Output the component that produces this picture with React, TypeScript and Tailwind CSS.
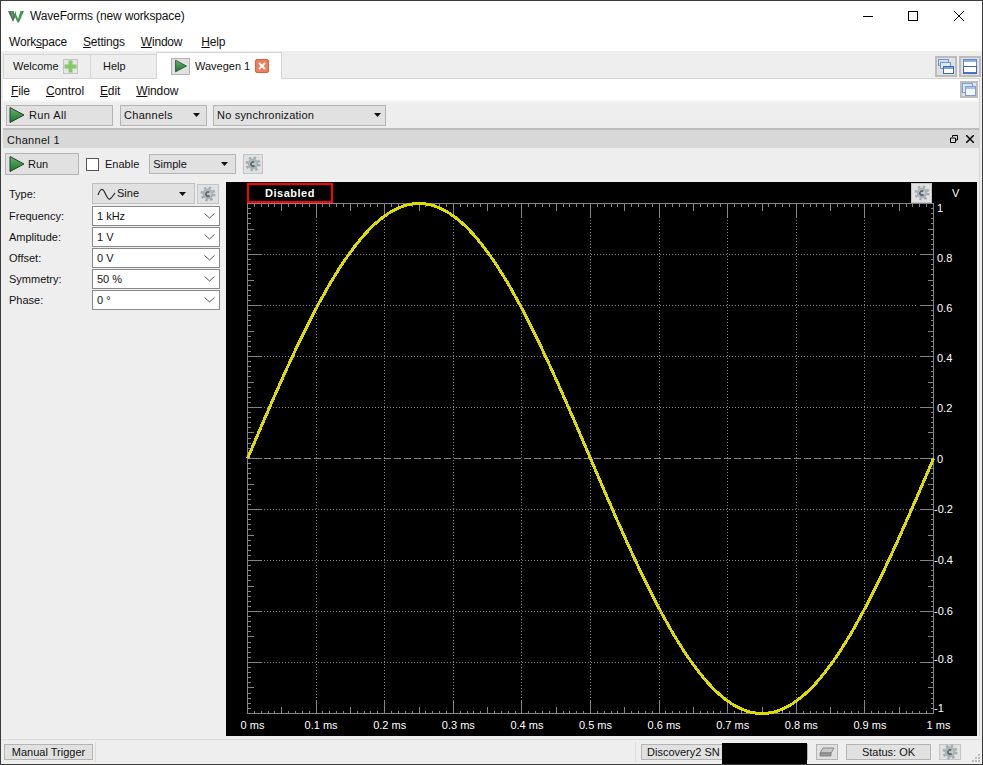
import React from 'react';

const labelFont = "font-['Liberation_Sans',Arial,sans-serif]";

const PlayIcon = ({ size = 18 }: { size?: number }) => (
  <svg width={size} height={size} viewBox="0 0 18 18" className="shrink-0">
    <defs>
      <linearGradient id="playFill" x1="0" y1="0" x2="0" y2="1">
        <stop offset="0" stopColor="#6fae6f" />
        <stop offset="1" stopColor="#0f7a2a" />
      </linearGradient>
    </defs>
    <path d="M2 1.5 L16 9 L2 16.5 Z" fill="url(#playFill)" stroke="#27402c" strokeWidth="1" />
  </svg>
);

const Caret = () => (
  <svg width="7" height="4" viewBox="0 0 7 4" className="shrink-0">
    <path d="M0 0 H7 L3.5 4 Z" fill="#111" />
  </svg>
);

const Chevron = () => (
  <svg width="11" height="6" viewBox="0 0 11 6" className="shrink-0">
    <path d="M0.5 0.5 L5.5 5 L10.5 0.5" fill="none" stroke="#555" strokeWidth="1" />
  </svg>
);

const GearIcon = () => (
  <svg width="16" height="16" viewBox="0 0 16 16">
    <circle cx="8" cy="8" r="6.2" fill="none" stroke="#a3adb2" strokeWidth="2.6" strokeDasharray="2.4 2.47" />
    <circle cx="8" cy="8" r="5.4" fill="#a9b2b7" />
    <circle cx="8" cy="8" r="3.4" fill="#c3c9cc" />
    <path d="M10 5.8 A3 3 0 1 0 10.4 10 L8.6 9 A1.2 1.2 0 1 1 8.6 7 Z" fill="#5a666c" />
  </svg>
);

const GearButton = ({ className }: { className: string }) => (
  <div className={`flex items-center justify-center border border-[#c4c4c4] bg-[#e1e1e1] ${className}`}>
    <GearIcon />
  </div>
);

const StackIcon = ({ variant }: { variant: 'cascade' | 'split' | 'small' }) => {
  if (variant === 'split') {
    return (
      <svg width="14" height="15" viewBox="0 0 14 15">
        <rect x="0.5" y="0.5" width="13" height="7" fill="#fff" stroke="#5f86c6" />
        <rect x="1" y="1" width="12" height="2" fill="#8fb0e2" />
        <rect x="0.5" y="7.5" width="13" height="7" fill="#fff" stroke="#3f68b0" />
        <rect x="1" y="13" width="12" height="1.5" fill="#4a74bd" />
      </svg>
    );
  }
  if (variant === 'small') {
    return (
      <svg width="14" height="13" viewBox="0 0 14 13">
        <rect x="0.5" y="0.5" width="10" height="9" fill="#dbe6f6" stroke="#7d9fd6" />
        <rect x="3.5" y="3.5" width="10" height="9" fill="#f4f7fc" stroke="#7d9fd6" />
        <rect x="4" y="4" width="9" height="2" fill="#a9c3e8" />
      </svg>
    );
  }
  return (
    <svg width="16" height="15" viewBox="0 0 16 15">
      <rect x="0.5" y="0.5" width="10" height="6" fill="#cfdcf2" stroke="#6f94d0" />
      <rect x="2.5" y="3.5" width="10" height="6" fill="#dfe8f7" stroke="#6f94d0" />
      <rect x="5.5" y="7.5" width="10" height="7" fill="#fff" stroke="#3f68b0" />
      <rect x="6" y="8" width="9" height="2" fill="#7fa3dc" />
    </svg>
  );
};

const Logo = () => (
  <svg width="16" height="13" viewBox="0 0 16 13" className="shrink-0">
    <path d="M0 1 L3 1 L5 7 L8 1 L8 5 L5 12 Z" fill="#5d6b62" />
    <path d="M3 1 L5.5 1 L7 5 L5.5 8 Z" fill="#3c8f4a" />
    <path d="M7.5 3 L10 9 L12.5 1 L16 1 L11 12.5 L9.5 12.5 L7 7 Z" fill="#3f9a4e" />
  </svg>
);

const Plot = () => {
  const left = 21.5;
  const right = 707.5;
  const top = 21.5;
  const bottom = 531.5;
  const stepX = (right - left) / 100;
  const stepY = (bottom - top) / 100;

  const ticks: React.ReactNode[] = [];
  for (let i = 1; i < 100; i++) {
    const x = Math.round(left + i * stepX - 0.5) + 0.5;
    const y = Math.round(top + i * stepY - 0.5) + 0.5;
    const lenX = i % 10 === 0 ? 14 : i % 5 === 0 ? 7 : 3;
    const lenY = i % 10 === 0 ? 14 : i % 5 === 0 ? 6 : 3;
    ticks.push(
      <path
        key={i}
        d={`M${x} ${top} V${top + lenX} M${x} ${bottom} V${bottom - lenX} M${left} ${y} H${left + lenY} M${right} ${y} H${right - lenY}`}
      />,
    );
  }

  const grid: React.ReactNode[] = [];
  for (let i = 1; i < 10; i++) {
    const x = Math.round(left + i * 10 * stepX - 0.5) + 0.5;
    const y = Math.round(top + i * 10 * stepY - 0.5) + 0.5;
    grid.push(
      <g key={i}>
        <path d={`M${x} ${top + 16} V${bottom - 16}`} strokeDasharray="1 2" />
        <path d={`M${left + 16} ${y} H${right - 16}`} strokeDasharray={i === 5 ? '7 3' : '1 2'} />
      </g>,
    );
  }

  const sine: string[] = [];
  for (let i = 0; i <= 400; i++) {
    const x = left + ((right - left) * i) / 400;
    const y = (top + bottom) / 2 - ((bottom - top) / 2) * Math.sin((2 * Math.PI * i) / 400);
    sine.push(`${i === 0 ? 'M' : 'L'}${x.toFixed(1)} ${y.toFixed(1)}`);
  }

  const yLabels: [string, number][] = [
    ['1', 30], ['0.8', 80], ['0.6', 130], ['0.4', 180], ['0.2', 230], ['0', 281],
    ['-0.2', 331], ['-0.4', 382], ['-0.6', 433], ['-0.8', 481], ['-1', 530],
  ];
  const xLabels = ['0 ms', '0.1 ms', '0.2 ms', '0.3 ms', '0.4 ms', '0.5 ms', '0.6 ms', '0.7 ms', '0.8 ms', '0.9 ms', '1 ms'];

  return (
    <svg width="751" height="554" viewBox="0 0 751 554" className="block">
      <g stroke="#858585" fill="none" strokeWidth="1" shapeRendering="crispEdges">
        {grid}
        {ticks}
        <rect x={left} y={top} width={right - left} height={bottom - top} />
      </g>
      <path d={sine.join(' ')} fill="none" stroke="#dcdc00" strokeWidth="3" shapeRendering="crispEdges" />
      <g fill="#fff" fontSize="11" fontFamily="'Liberation Sans', Arial, sans-serif">
        {yLabels.map(([t, y]) => (
          <text key={t} x={t.startsWith('-') ? 708 : 711} y={y}>{t}</text>
        ))}
        {xLabels.map((t, i) => (
          <text key={t} x={left + i * 68.6 + 5} y={547} textAnchor="middle">{t}</text>
        ))}
      </g>
    </svg>
  );
};

const params = [
  ['Frequency:', '1 kHz'],
  ['Amplitude:', '1 V'],
  ['Offset:', '0 V'],
  ['Symmetry:', '50 %'],
  ['Phase:', '0 °'],
];

export default function App() {
  return (
    <div className={`relative box-border flex h-[765px] w-[983px] flex-col overflow-hidden border border-[#3c3c3c] bg-[#eeeeee] text-[11px] leading-none text-[#111] ${labelFont}`}>
      {/* title bar */}
      <div className="flex h-[30px] shrink-0 items-center bg-white pl-[7px]">
        <Logo />
        <span className="ml-[6px] text-[12px] tracking-[-0.15px]">WaveForms (new workspace)</span>
        <div className="ml-auto flex items-center">
          <div className="mr-[35px] h-px w-[10px] bg-black" />
          <div className="mr-[36px] h-[10px] w-[10px] border border-black" />
          <svg width="10" height="10" viewBox="0 0 10 10" className="mr-[18px]">
            <path d="M0 0 L10 10 M10 0 L0 10" stroke="#000" strokeWidth="1" />
          </svg>
        </div>
      </div>

      {/* main menu */}
      <div className="flex h-[20px] shrink-0 items-center gap-[16px] bg-white pl-[8px] pt-[2px] text-[12px] tracking-[-0.2px]">
        <span>Work<u>s</u>pace</span>
        <span><u>S</u>ettings</span>
        <span className="mr-[3px]"><u>W</u>indow</span>
        <span><u>H</u>elp</span>
      </div>

      {/* tabs */}
      <div className="flex h-[27px] shrink-0 items-end pl-[2px] pr-[1px]">
        <div className="flex h-[24px] w-[87px] items-center border-l border-t border-[#d4d4d4] pl-[9px]">
          <span>Welcome</span>
          <div className="ml-[4px] flex h-[15px] w-[15px] items-center justify-center border border-[#c4c4c4] bg-[#e6e6e6]">
            <svg width="13" height="13" viewBox="0 0 13 13">
              <path d="M4.5 0.5 H8.5 V4.5 H12.5 V8.5 H8.5 V12.5 H4.5 V8.5 H0.5 V4.5 H4.5 Z" fill="#86c96a" />
            </svg>
          </div>
        </div>
        <div className="flex h-[24px] w-[66px] items-center border-l border-t border-[#d4d4d4] pl-[12px]">Help</div>
        <div className="relative z-10 -mb-px flex h-[27px] w-[126px] items-center border border-b-0 border-[#d4d4d4] bg-white pl-[14px]">
          <div className="flex h-[17px] w-[19px] items-center justify-center border border-[#b4b4b4] bg-[#e1e1e1]">
            <PlayIcon size={14} />
          </div>
          <span className="ml-[5px]">Wavegen 1</span>
          <div className="ml-[5px] flex h-[14px] w-[14px] items-center justify-center rounded-[2px] border border-[#d9623a] bg-[#ee7d5b]">
            <svg width="8" height="8" viewBox="0 0 8 8">
              <path d="M1 1 L7 7 M7 1 L1 7" stroke="#fff" strokeWidth="2" />
            </svg>
          </div>
        </div>
        <div className="mb-px ml-auto flex gap-[2px]">
          <div className="flex h-[21px] w-[22px] items-center justify-center border-2 border-[#bcbcbc] bg-[#e1e1e1]">
            <StackIcon variant="cascade" />
          </div>
          <div className="flex h-[21px] w-[22px] items-center justify-center border-2 border-[#bcbcbc] bg-[#e1e1e1]">
            <StackIcon variant="split" />
          </div>
        </div>
      </div>

      {/* workspace */}
      <div className="mx-[2px] flex flex-1 flex-col border-r border-t border-[#d4d4d4] pr-0">
        <div className="flex h-[21px] shrink-0 items-center gap-[16px] bg-white pl-[8px] text-[12px] tracking-[-0.1px]">
          <span className="pt-[2px]"><u>F</u>ile</span>
          <span className="pt-[2px]"><u>C</u>ontrol</span>
          <span className="pt-[2px]"><u>E</u>dit</span>
          <span className="pt-[2px]"><u>W</u>indow</span>
          <div className="ml-auto mr-[1px] flex h-[17px] w-[18px] items-center justify-center border-2 border-[#bcbcbc] bg-[#e1e1e1]">
            <StackIcon variant="small" />
          </div>
        </div>
        <div className="h-[2px] shrink-0 bg-[#f6f6f6]" />

        <div className="flex h-[26px] shrink-0 items-center pl-[3px]">
          <div className="flex h-[21px] w-[107px] items-center border border-[#b4b4b4] bg-[#e1e1e1] pl-[1px]">
            <PlayIcon />
            <span className="ml-[3px] tracking-[0.4px]">Run All</span>
          </div>
          <div className="ml-[7px] flex h-[21px] w-[87px] items-center justify-between border border-[#b4b4b4] bg-[#e1e1e1] pl-[3px] pr-[6px]">
            <span className="tracking-[0.3px]">Channels</span>
            <Caret />
          </div>
          <div className="ml-[6px] flex h-[21px] w-[173px] items-center justify-between border border-[#b4b4b4] bg-[#e1e1e1] pl-[3px] pr-[4px]">
            <span className="tracking-[0.2px]">No synchronization</span>
            <Caret />
          </div>
        </div>

        <div className="flex h-[20px] shrink-0 items-center border-t-2 border-[#bcbcbc] bg-[#d8d8d8] pl-[4px] pr-[5px]">
          <span className="pt-[3px] tracking-[0.3px]">Channel 1</span>
          <svg width="8" height="8" viewBox="0 0 8 8" className="ml-auto">
            <path d="M2.5 2 V0.5 H7.5 V5 H5.5 M0.5 3 H5.5 V7.5 H0.5 Z" fill="none" stroke="#000" />
          </svg>
          <svg width="8" height="8" viewBox="0 0 8 8" className="ml-[8px]">
            <path d="M0 0 L8 8 M8 0 L0 8" stroke="#000" strokeWidth="1.5" />
          </svg>
        </div>

        <div className="flex h-[34px] shrink-0 items-center pb-[2px] pl-[2px]">
          <div className="flex h-[22px] w-[74px] items-center border border-[#b4b4b4] bg-[#e1e1e1] pl-[2px]">
            <PlayIcon />
            <span className="ml-[2px]">Run</span>
          </div>
          <div className="ml-[7px] h-[13px] w-[13px] border border-[#555] bg-white" />
          <span className="ml-[6px]">Enable</span>
          <div className="ml-[10px] flex h-[20px] w-[87px] items-center justify-between border border-[#b4b4b4] bg-[#e1e1e1] pl-[3px] pr-[7px]">
            <span>Simple</span>
            <Caret />
          </div>
          <GearButton className="ml-[7px] h-[20px] w-[20px]" />
        </div>

        <div className="flex h-[554px] shrink-0">
          <div className="flex w-[223px] shrink-0 flex-col gap-[1px] pl-[6px] pt-[1px]">
            <div className="flex h-[22px] items-start">
              <span className="mt-[6px] w-[83px]">Type:</span>
              <div className="flex h-[21px] w-[103px] items-center border border-[#c0c0c0] bg-[#e1e1e1] pl-[4px] pr-[8px]">
                <svg width="19" height="14" viewBox="0 0 19 14" className="shrink-0">
                  <path d="M1 8 C3 2 5 1 7 4 C9 8 11 13 13 12 C15 11 17 7 18 6" fill="none" stroke="#222" strokeWidth="1.1" />
                </svg>
                <span className="ml-[1px]">Sine</span>
                <div className="ml-auto"><Caret /></div>
              </div>
              <GearButton className="ml-[2px] mt-[1px] h-[20px] w-[22px]" />
            </div>
            {params.map(([label, value]) => (
              <div key={label} className="flex h-[20px] items-center">
                <span className="w-[83px]">{label}</span>
                <div className="flex h-[20px] w-[128px] items-center justify-between border border-[#8a8a8a] bg-white pl-[4px] pr-[4px]">
                  <span>{value}</span>
                  <Chevron />
                </div>
              </div>
            ))}
          </div>

          <div className="relative w-[751px] shrink-0 bg-black">
            <Plot />
            <div className="absolute left-[21px] top-[1px] flex h-[20px] w-[86px] items-center justify-center border-2 border-[#ff0000] text-[11px] font-bold tracking-[0.5px] text-white">
              Disabled
            </div>
            <GearButton className="absolute left-[685px] top-[1px] h-[20px] w-[21px]" />
            <span className="absolute left-[726px] top-[6px] text-white">V</span>
          </div>
        </div>
      </div>

      {/* status bar */}
      <div className="relative mt-[3px] flex h-[25px] shrink-0 items-center border-t border-[#dcdcdc] bg-[#eeeeee] pl-[3px]">
        <div className="flex h-[16px] w-[89px] items-center justify-center border border-[#b4b4b4] bg-[#e1e1e1]">Manual Trigger</div>
        <div className="ml-[2px] h-[20px] w-px bg-[#dcdcdc]" />
        <div className="ml-[539px] h-[20px] w-px bg-[#dcdcdc]" />
        <div className="ml-[5px] flex h-[16px] w-[167px] items-center border border-[#b4b4b4] bg-[#e1e1e1] pl-[5px]">Discovery2 SN</div>
        <div className="ml-[8px] flex h-[16px] w-[22px] items-center justify-center border border-[#b4b4b4] bg-[#e1e1e1]">
          <svg width="16" height="10" viewBox="0 0 16 10">
            <path d="M4 1 H15 L12 6 H1 Z" fill="#c8c8c8" stroke="#777" strokeWidth="0.8" />
            <path d="M1 6 H12 V9 H1 Z" fill="#9a9a9a" stroke="#777" strokeWidth="0.8" />
          </svg>
        </div>
        <div className="ml-[8px] flex h-[16px] w-[85px] items-center justify-center border border-[#b4b4b4] bg-[#e1e1e1]">Status: OK</div>
        <GearButton className="ml-[8px] h-[16px] w-[22px]" />
        <svg width="8" height="8" viewBox="0 0 8 8" className="absolute bottom-[2px] right-[2px]">
          <path d="M6 0 h2 v2 h-2 Z M3 3 h2 v2 h-2 Z M6 3 h2 v2 h-2 Z M0 6 h2 v2 h-2 Z M3 6 h2 v2 h-2 Z M6 6 h2 v2 h-2 Z" fill="#bdbdbd" />
        </svg>
        <div className="absolute bottom-0 left-[721px] h-[21px] w-[85px] bg-black" />
      </div>
    </div>
  );
}
